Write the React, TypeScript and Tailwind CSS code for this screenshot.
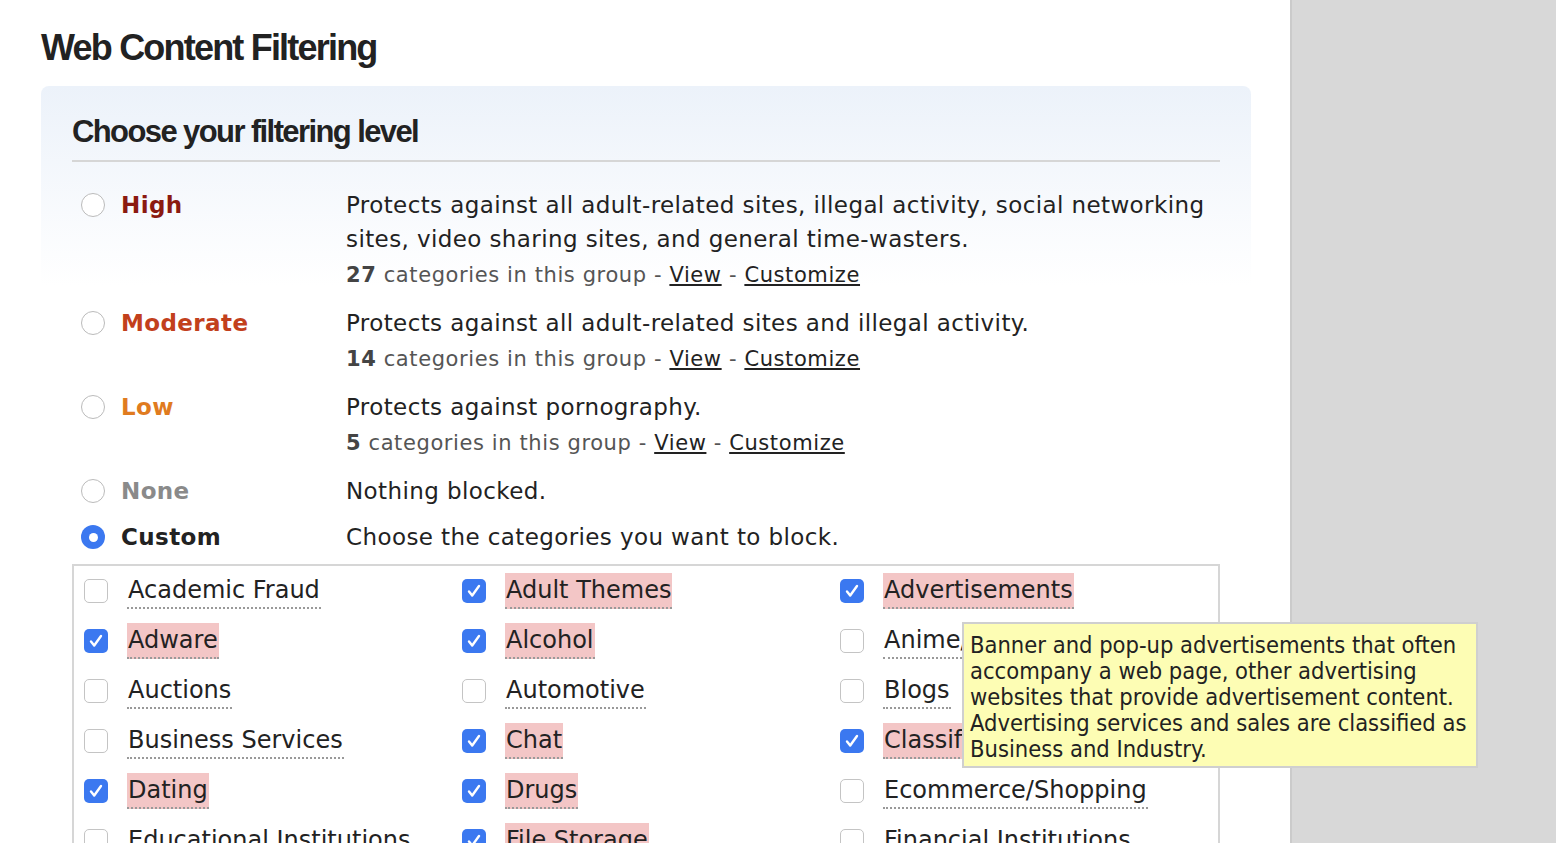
import React from "react";

const levels = [
  { name: "High", color: "text-[#8b1a10]", desc: ["Protects against all adult-related sites, illegal activity, social networking", "sites, video sharing sites, and general time-wasters."], n: "27" },
  { name: "Moderate", color: "text-[#c2401c]", desc: ["Protects against all adult-related sites and illegal activity."], n: "14" },
  { name: "Low", color: "text-[#e07b1f]", desc: ["Protects against pornography."], n: "5" },
  { name: "None", color: "text-[#8a8a8a]", desc: ["Nothing blocked."], n: "" },
];

const cats: [string, boolean][] = [
  ["Academic Fraud", false], ["Adult Themes", true], ["Advertisements", true],
  ["Adware", true], ["Alcohol", true], ["Anime/Manga/Webcomic", false],
  ["Auctions", false], ["Automotive", false], ["Blogs", false],
  ["Business Services", false], ["Chat", true], ["Classifieds", true],
  ["Dating", true], ["Drugs", true], ["Ecommerce/Shopping", false],
  ["Educational Institutions", false], ["File Storage", true], ["Financial Institutions", false],
];

function Box({ on }: { on: boolean }) {
  return on ? (
    <span className="w-[24px] h-[24px] rounded-[5px] bg-[#3b78f0] flex items-center justify-center shrink-0">
      <svg width="16" height="16" viewBox="0 0 16 16"><path d="M3 8.5l3.2 4L13 3" fill="none" stroke="white" strokeWidth="2.4" strokeLinecap="round" strokeLinejoin="round" /></svg>
    </span>
  ) : (
    <span className="w-[24px] h-[24px] rounded-[5px] border border-[#c4c4c4] bg-white shrink-0" />
  );
}

export default function App() {
  const body = { fontFamily: "'DejaVu Sans', Verdana, sans-serif" };
  const head = { fontFamily: "'Liberation Sans', Arial, sans-serif" };
  return (
    <div className="w-[1556px] h-[843px] overflow-hidden flex bg-white" style={body}>
      <div className="w-[1290px] shrink-0 relative">
        <h1 className="pl-[41px] pt-[26px] text-[36px] font-bold tracking-[-1.8px] text-[#222] leading-[44px]" style={head}>Web Content Filtering</h1>
        <div className="ml-[41px] mt-[16px] w-[1210px] rounded-t-[8px] bg-gradient-to-b from-[#ecf2fa] to-white to-[200px] px-[31px] pt-[26px]">
          <h2 className="text-[31px] font-bold tracking-[-1.6px] text-[#222] leading-[40px] pb-[8px] border-b-2 border-[#d6d6d6]" style={head}>Choose your filtering level</h2>
          <div className="pt-[26px] text-[23px] tracking-[0.4px] text-[#222]">
            {levels.map((l) => (
              <div key={l.name} className="flex mb-[12px]">
                <div className="w-[274px] flex items-center h-[34px] pl-[9px] gap-[16px]">
                  <span className="w-[24px] h-[24px] rounded-full border border-[#bbb] bg-white" />
                  <span className={`font-bold ${l.color}`}>{l.name}</span>
                </div>
                <div>
                  {l.desc.map((d) => <div key={d} className="leading-[34px]">{d}</div>)}
                  {l.n && (
                    <div className="leading-[38px] text-[21px] tracking-[0.6px] text-[#555]">
                      <b className="text-[#444]">{l.n}</b> categories in this group - <span className="underline text-[#222]">View</span> - <span className="underline text-[#222]">Customize</span>
                    </div>
                  )}
                </div>
              </div>
            ))}
            <div className="flex mb-[10px]">
              <div className="w-[274px] flex items-center h-[34px] pl-[9px] gap-[16px]">
                <span className="w-[24px] h-[24px] rounded-full bg-[#3b78f0] flex items-center justify-center"><span className="w-[9px] h-[9px] rounded-full bg-white" /></span>
                <span className="font-bold text-[#222]">Custom</span>
              </div>
              <div className="leading-[34px]">Choose the categories you want to block.</div>
            </div>
          </div>
          <div className="border-2 border-[#d6d6d6] border-b-0 grid grid-cols-3 pt-0 pl-[10px] text-[24px] text-[#222]">
            {cats.map(([c, on]) => (
              <div key={c} className="flex items-center h-[50px] gap-[19px]">
                <Box on={on} />
                <span className={`leading-[34px] px-[1px] border-b-2 border-dotted border-[#999] whitespace-nowrap ${on ? "bg-[#f3c6c6]" : ""}`}>{c}</span>
              </div>
            ))}
          </div>
        </div>
        <div className="absolute left-[962px] top-[622px] w-[516px] bg-[#fdfdb4] border-2 border-[#cfcfcf] px-[6px] pt-[8px] pb-[4px] text-[23.5px] leading-[26px] text-[#222] z-10" style={{ fontFamily: "'DejaVu Sans Condensed', 'Liberation Sans Narrow', sans-serif" }}>
          Banner and pop-up advertisements that often accompany a web page, other advertising websites that provide advertisement content. Advertising services and sales are classified as Business and Industry.
        </div>
      </div>
      <div className="flex-1 bg-[#d8d8d8] border-l-2 border-[#cbcbcb]" />
    </div>
  );
}
